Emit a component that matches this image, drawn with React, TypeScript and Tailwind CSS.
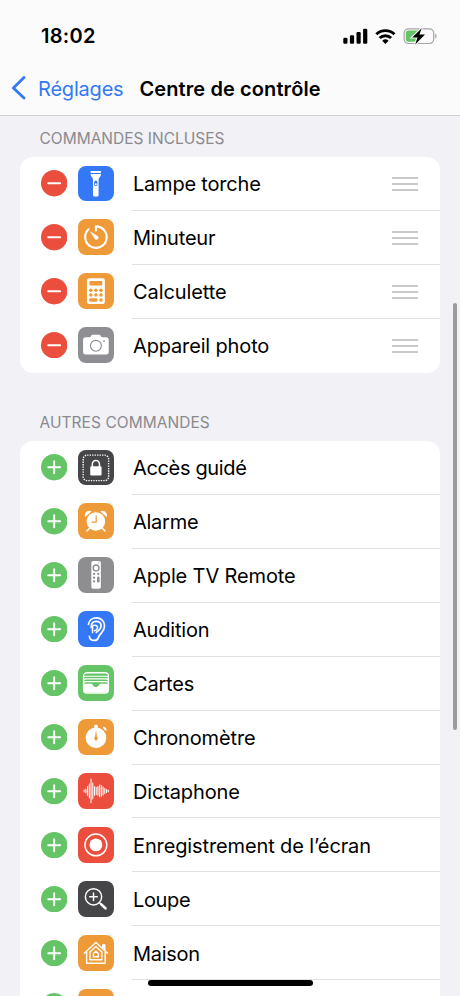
import type { ReactNode } from 'react';

type Item = { label: string; bg: string; icon: ReactNode; tracking?: string };

const Torch = () => (
  <g fill="#fff">
    <rect x="12.6" y="5" width="10.6" height="2" rx="0.6" />
    <path d="M12.6 8h10.6c0 2.6-2.5 3.6-2.5 5.6v15.6c0 1-.6 1.5-1.4 1.5h-2.8c-.8 0-1.4-.5-1.4-1.5V13.6c0-2-2.5-3-2.5-5.6z" />
    <rect x="16.3" y="14.6" width="3.2" height="5.6" rx="1.6" fill="#3478f6" />
    <circle cx="17.9" cy="18.4" r="1" />
  </g>
);

const Timer = () => (
  <g fill="none" stroke="#fff" strokeWidth="2.1" strokeLinecap="round" strokeLinejoin="round">
    <path d="M18 11.6V7.4A10.8 10.8 0 1 1 10.6 10.4" />
    <path d="M12.9 13.1L18.8 16.8A1.9 1.9 0 1 1 16.6 19Z" fill="#fff" strokeWidth="0.6" />
  </g>
);

const Calculator = () => (
  <g>
    <rect x="9" y="5.2" width="18" height="26" rx="2.4" fill="#fff" />
    <g fill="#ef9a38">
      <rect x="11.6" y="8" width="12.8" height="4.6" rx="0.5" />
      {[12.9, 18, 23.1].map((x) => (
        <g key={x}>
          <circle cx={x} cy="17.3" r="1.8" />
          <circle cx={x} cy="22.2" r="1.8" />
        </g>
      ))}
      <rect x="11.1" y="25.4" width="8.7" height="3.4" rx="1.7" />
      <circle cx="23.1" cy="27.1" r="1.8" />
    </g>
  </g>
);

const Camera = () => (
  <g>
    <path
      d="M7.6 10.2h4.1c.8 0 1-.5 1.4-1.2.4-.8.9-1.2 1.8-1.2h6.2c.9 0 1.4.4 1.8 1.2.4.7.6 1.2 1.4 1.2h4.1c1.6 0 2.5.9 2.5 2.4v12.6c0 1.6-.9 2.5-2.5 2.5H7.6c-1.6 0-2.500-.9-2.500-2.500V12.600c0-1.500.9-2.400 2.500-2.400z"
      fill="#fff"
    />
    <circle cx="18" cy="18.9" r="5.5" fill="none" stroke="#8e8e93" strokeWidth="1.2" />
    <circle cx="26.2" cy="14.1" r="0.9" fill="#8e8e93" />
  </g>
);

const GuidedAccess = () => (
  <g>
    <rect x="5.2" y="5.2" width="25.6" height="25.6" rx="4" fill="none" stroke="#fff" strokeWidth="1.4" strokeDasharray="1.35 1.15" />
    <rect x="12.3" y="16.3" width="11.4" height="9.4" rx="1.2" fill="#fff" />
    <path d="M14.4 17v-2.6a3.6 3.9 0 0 1 7.2 0V17" fill="none" stroke="#fff" strokeWidth="1.5" />
  </g>
);

const Alarm = () => (
  <g>
    <path d="M11.6 25.4L9 28M24.4 25.4L27 28" fill="none" stroke="#fff" strokeWidth="1.6" strokeLinecap="round" />
    <path d="M7.3 14.2C5.5 10.3 9.7 6.2 13.7 8.4zM28.7 14.2C30.5 10.3 26.3 6.2 22.3 8.4z" fill="#fff" />
    <circle cx="18" cy="18.5" r="9.3" fill="#fff" />
    <path d="M18.3 12.6v6.700h-4.600" fill="none" stroke="#ef9a38" strokeWidth="1.2" />
  </g>
);

const Remote = () => (
  <g>
    <rect x="13.4" y="4" width="9.6" height="28" rx="2" fill="#fff" />
    <g fill="#8e8e93">
      <circle cx="20.9" cy="5.8" r="0.6" />
      <circle cx="18.2" cy="11" r="2.9" fill="none" stroke="#8e8e93" strokeWidth="1.4" />
      <circle cx="16.2" cy="17" r="1.15" />
      <circle cx="20.4" cy="17" r="1.15" />
      <circle cx="16.2" cy="20.8" r="1.15" />
      <circle cx="16.2" cy="24.6" r="1.15" />
      <rect x="19.1" y="19.7" width="2.6" height="6" rx="1.3" />
    </g>
  </g>
);

const Ear = () => (
  <g fill="none" stroke="#fff" strokeWidth="1.7" strokeLinecap="round" strokeLinejoin="round">
    <path d="M10.500 13.500C11 9.500 14.300 7 18.400 7c4.800 0 8.300 3.300 8.300 8 0 6.200-5 7.400-6.100 11.300-.6 2.200-1.800 3.300-4.200 3.300-2.700 0-4.600-1.600-5-4.200" />
    <path d="M13.200 16.500c0-3.600 2-6 5.100-6 3 0 4.900 2 4.900 4.700 0 3.600-2.800 4.600-4.800 6.300" />
    <path d="M14.600 15.200c2.700-2.100 5.700-.4 4.900 2.400-.3 1.200-1.200 1.900-2.800 2.200M14.600 15.400v6.500" strokeWidth="1.5" />
  </g>
);

const Wallet = () => (
  <g>
    <rect x="5.6" y="7.8" width="25" height="20.400" rx="3.400" fill="none" stroke="#fff" strokeWidth="1.3" />
    <path d="M6 12.300q.6-1 2-1h20.200q1.400 0 2 1M6 15q.6-1 2-1h20.200q1.400 0 2 1M6 17.700q.6-1 2-1h20.200q1.400 0 2 1" fill="none" stroke="#fff" strokeWidth="1.200" />
    <path d="M5.800 18.800h7.900c1.300 0 1.200 3.400 4.300 3.400s3-3.400 4.300-3.400h8.100v6.700q0 2.500-2.500 2.500H8.300q-2.500 0-2.500-2.500z" fill="#fff" />
  </g>
);

const Stopwatch = () => (
  <g>
    <rect x="16.3" y="5.9" width="3.6" height="4" rx="0.8" fill="#fff" />
    <path d="M26.2 8.800l1.700 1.700" stroke="#fff" strokeWidth="2" strokeLinecap="round" />
    <circle cx="18.1" cy="18.9" r="10.400" fill="#fff" />
    <path d="M18.100 11l1 7.200h-2z" fill="#ef9a38" />
    <circle cx="18.100" cy="19.400" r="1.800" fill="#ef9a38" />
    <path d="M18.100 20v2.400" stroke="#ef9a38" strokeWidth="0.9" />
  </g>
);

const waves = [2, 4, 9, 14, 24, 16, 9, 7, 9, 12, 11, 8, 5, 3, 1.5];
const Voice = () => (
  <g stroke="#fff" strokeWidth="1.05" strokeLinecap="round">
    {waves.map((h, i) => (
      <path key={i} d={`M${6.2 + i * 1.73} ${18 - h / 2}v${h}`} />
    ))}
  </g>
);

const Record = () => (
  <g>
    <circle cx="18" cy="18" r="11" fill="none" stroke="#fff" strokeWidth="1.5" />
    <circle cx="18" cy="18" r="6.5" fill="#fff" />
  </g>
);

const Magnifier = () => (
  <g fill="none" stroke="#fff" strokeLinecap="round">
    <circle cx="15.6" cy="15.9" r="8.2" strokeWidth="1.5" />
    <path d="M15.6 12.100v7.600M11.800 15.900h7.600" strokeWidth="1.5" />
    <path d="M21.600 21.900l1.600 1.500" strokeWidth="1.6" />
    <path d="M23.400 23.500l4.200 4" strokeWidth="2.7" />
  </g>
);

const Home = () => (
  <g fill="none" stroke="#fff" strokeWidth="1.4" strokeLinejoin="round" strokeLinecap="round">
    <path d="M6.300 18.400L18 7.600l11.700 10.800" />
    <path d="M24.600 12.600V9.700h2.600v5.600" fill="#fff" strokeWidth="1" />
    <path d="M8.700 17.400v11h18.600v-11" />
    <path d="M12 24.900V17l6-5.500 6 5.500v7.900z" />
    <path d="M15.500 21.900v-3.300l2.500-2.200 2.500 2.200v3.300z" />
  </g>
);

const included: Item[] = [
  { label: 'Lampe torche', bg: 'bg-[#3478f6]', icon: <Torch /> },
  { label: 'Minuteur', bg: 'bg-[#ef9a38]', icon: <Timer /> },
  { label: 'Calculette', bg: 'bg-[#ef9a38]', icon: <Calculator />, tracking: 'tracking-[-0.08px]' },
  { label: 'Appareil photo', bg: 'bg-[#8e8e93]', icon: <Camera />, tracking: 'tracking-[-0.15px]' },
];

const others: Item[] = [
  { label: 'Accès guidé', bg: 'bg-[#464648]', icon: <GuidedAccess />, tracking: 'tracking-[-0.34px]' },
  { label: 'Alarme', bg: 'bg-[#ef9a38]', icon: <Alarm />, tracking: 'tracking-[-0.26px]' },
  { label: 'Apple TV Remote', bg: 'bg-[#8e8e90]', icon: <Remote />, tracking: 'tracking-[-0.13px]' },
  { label: 'Audition', bg: 'bg-[#3478f6]', icon: <Ear /> },
  { label: 'Cartes', bg: 'bg-[#65c466]', icon: <Wallet /> },
  { label: 'Chronomètre', bg: 'bg-[#ef9a38]', icon: <Stopwatch />, tracking: 'tracking-[-0.14px]' },
  { label: 'Dictaphone', bg: 'bg-[#eb4e3d]', icon: <Voice />, tracking: 'tracking-[-0.14px]' },
  { label: 'Enregistrement de l’écran', bg: 'bg-[#eb4e3d]', icon: <Record />, tracking: 'tracking-[-0.12px]' },
  { label: 'Loupe', bg: 'bg-[#464648]', icon: <Magnifier />, tracking: 'tracking-[-0.36px]' },
  { label: 'Maison', bg: 'bg-[#ef9a38]', icon: <Home />, tracking: 'tracking-[-0.28px]' },
  { label: '', bg: 'bg-[#ef9a38]', icon: null },
];

function Row({ item, included: isIncluded, last }: { item: Item; included: boolean; last: boolean }) {
  return (
    <div className="flex h-[53.93px] shrink-0 pl-[20.8px]">
      <div className="flex items-center pb-px">
        <svg className="size-[26.4px]" viewBox="0 0 26.4 26.4">
          <circle cx="13.2" cy="13.2" r="13.2" fill={isIncluded ? '#eb4e3d' : '#65c466'} />
          <path d={isIncluded ? 'M7.2 13.2h12' : 'M7.2 13.2h12M13.2 7.2v12'} stroke="#fff" strokeWidth="1.9" strokeLinecap="round" />
        </svg>
        <div className={`ml-[11px] size-[35.8px] overflow-hidden rounded-[8px] ${item.bg}`}>
          <svg className="size-full" viewBox="0 0 36 36">{item.icon}</svg>
        </div>
      </div>
      <div className={`ml-[18px] flex flex-1 items-center justify-between border-b pr-[22px] ${last ? 'border-transparent' : 'border-[#e1e1e3]'}`}>
        <span className={`pt-[2px] pl-px text-[20px] leading-6 whitespace-nowrap ${item.tracking ?? 'tracking-[-0.2px]'}`}>{item.label}</span>
        {isIncluded && (
          <div className="flex flex-col gap-[4px] pt-[2px]">
            <div className="h-[2px] w-[26px] bg-[#c9c9cb]" />
            <div className="h-[2px] w-[26px] bg-[#c9c9cb]" />
            <div className="h-[2px] w-[26px] bg-[#c9c9cb]" />
          </div>
        )}
      </div>
    </div>
  );
}

export default function App() {
  return (
    <div className="relative flex h-[996px] w-[460px] flex-col overflow-hidden bg-[#f1f1f6] font-['Inter','Liberation_Sans',sans-serif] text-black">
      <header className="h-[116px] shrink-0 border-b border-[#d0d0d3] bg-[#fbfbfc]">
        <div className="flex h-[60px] items-center justify-between pt-[12px] pr-[22px] pl-[41px]">
          <span className="text-[20px] leading-6 font-semibold tracking-[0.3px]">18:02</span>
          <svg className="h-[20px] w-[96px]" viewBox="0 0 96 20">
            <g transform="translate(-342 -26)">
              <rect x="343.3" y="37.8" width="4.2" height="5.9" rx="1.2" />
              <rect x="349.9" y="35.2" width="4.2" height="8.5" rx="1.2" />
              <rect x="356.5" y="32" width="4.2" height="11.7" rx="1.2" />
              <rect x="363.1" y="28.7" width="4.2" height="15" rx="1.2" />
              <g fill="none" stroke="#000" strokeWidth="2.9">
                <path d="M376.3 34.3a13.200 13.200 0 0 1 18.200 0" />
                <path d="M379.7 38a8.300 8.300 0 0 1 11.400 0" />
              </g>
              <path d="M385.4 43.900l-3.200-3.200a4.700 4.700 0 0 1 6.400 0z" />
              <rect x="404.1" y="28.8" width="29.6" height="14.7" rx="4.4" fill="none" stroke="#a5a5a6" strokeWidth="1.2" />
              <path d="M435.2 33.800c1.900.5 1.900 4.200 0 4.700z" fill="#a5a5a6" />
              <rect x="405.8" y="30.5" width="14" height="11.3" rx="2.7" fill="#65c466" />
              <path d="M421.7 28.200l-9.500 9.300h5.300l-2.300 6.900 9.800-9.800h-5.600z" stroke="#fbfbfc" strokeWidth="2.2" />
              <path d="M421.7 28.200l-9.500 9.300h5.300l-2.300 6.900 9.800-9.800h-5.600z" />
            </g>
          </svg>
        </div>
        <nav className="flex h-[55px] items-center pt-px pl-[11px]">
          <svg className="h-[24px] w-[16px]" viewBox="0 0 16 24" fill="none" stroke="#3478f6" strokeWidth="2.8" strokeLinecap="round" strokeLinejoin="round">
            <path d="M13 1.600L2.400 11.900 13 22.100" />
          </svg>
          <span className="ml-[11px] pt-px text-[20px] leading-6 tracking-[-0.2px] text-[#3478f6]">Réglages</span>
          <h1 className="ml-[16px] pt-px text-[20px] leading-6 font-semibold tracking-[0.1px]">Centre de contrôle</h1>
        </nav>
      </header>
      <main className="flex flex-col px-5">
        <h2 className="h-[41px] pt-[13px] pl-[19.5px] text-[15.5px] leading-5 text-[#8a8a8e]">COMMANDES INCLUSES</h2>
        <section className="flex flex-col rounded-[13px] bg-white">
          {included.map((item, i) => (
            <Row key={item.label} item={item} included last={i === included.length - 1} />
          ))}
        </section>
        <h2 className="h-[68.3px] pt-[40px] pl-[19.5px] text-[15.5px] leading-5 tracking-[0.05px] text-[#8a8a8e]">AUTRES COMMANDES</h2>
        <section className="flex flex-col rounded-t-[13px] bg-white">
          {others.map((item) => (
            <Row key={item.label} item={item} included={false} last={false} />
          ))}
        </section>
      </main>
      <div className="absolute top-[303px] left-[453px] h-[427px] w-[4px] rounded-full bg-[#9b9b9f]" />
      <div className="absolute top-[980px] left-[148px] h-[6px] w-[165px] rounded-full bg-black" />
    </div>
  );
}
